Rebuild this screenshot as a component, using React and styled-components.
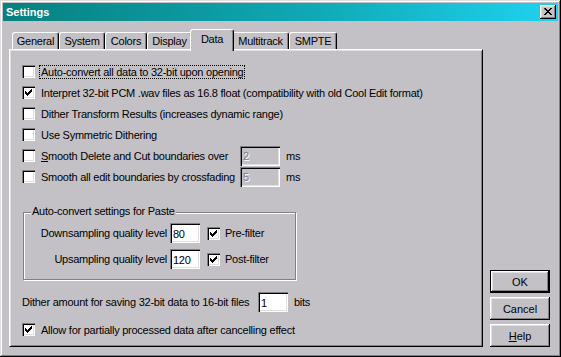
import styled, { createGlobalStyle } from "styled-components";

const face = "#c3c1c6";

const GlobalStyle = createGlobalStyle`
  html, body {
    margin: 0;
    padding: 0;
    background: ${face};
  }
  body {
    font-family: "Liberation Sans", Arial, sans-serif;
    font-size: 11px;
    letter-spacing: -0.25px;
    color: #000;
  }
`;

const raised = `
  box-shadow: inset -1px -1px #000, inset 1px 1px #fff,
    inset -2px -2px #808080, inset 2px 2px #dfdfdf;
`;

const sunken = `
  box-shadow: inset 1px 1px #808080, inset 2px 2px #000,
    inset -1px -1px #fff, inset -2px -2px #dfdfdf;
`;

const Window = styled.div`
  width: 561px;
  height: 357px;
  box-sizing: border-box;
  padding: 3px;
  background: ${face};
  box-shadow: inset -1px -1px #000, inset 1px 1px #dfdfdf,
    inset -2px -2px #808080, inset 2px 2px #fff;
  display: flex;
  flex-direction: column;
`;

const TitleBar = styled.div`
  height: 18px;
  flex: none;
  display: flex;
  align-items: center;
  justify-content: space-between;
  padding: 0 2px 0 3px;
  background: linear-gradient(to right, #07807f, #0fa8b4 55%, #1fd2f0);
  color: #fff;
  font-weight: bold;
  font-size: 11px;
  letter-spacing: 0;
`;

const CloseButton = styled.div`
  width: 16px;
  height: 14px;
  box-sizing: border-box;
  background: ${face};
  ${raised}
  display: flex;
  align-items: center;
  justify-content: center;
  padding-bottom: 1px;
`;

const Body = styled.div`
  flex: 1;
  display: flex;
  gap: 7px;
  padding: 8px 8px 7px 6px;
`;

const Sheet = styled.div`
  width: 474px;
  display: flex;
  flex-direction: column;
`;

const TabStrip = styled.div`
  height: 20px;
  display: flex;
  align-items: flex-end;
  padding-left: 3px;
`;

const Tab = styled.div`
  width: ${(p) => p.$w}px;
  height: ${(p) => (p.$active ? 22 : 17)}px;
  margin: ${(p) => (p.$active ? "0 -2px -2px" : "0")};
  position: relative;
  z-index: ${(p) => (p.$active ? 1 : 0)};
  box-sizing: border-box;
  display: flex;
  align-items: ${(p) => (p.$active ? "flex-start" : "center")};
  padding-top: ${(p) => (p.$active ? 3 : 0)}px;
  justify-content: center;
  background: ${face};
  border: 1px solid;
  border-color: #fff #000 transparent #fff;
  border-bottom: none;
  border-radius: 3px 3px 0 0;
  box-shadow: inset -1px 0 #808080;
`;

const Panel = styled.div`
  flex: 1;
  box-sizing: border-box;
  border: 1px solid;
  border-color: #fff #000 #000 #fff;
  box-shadow: inset 1px 1px #dfdfdf, inset -1px -1px #808080;
  padding: 11px 12px 0 12px;
  display: flex;
  flex-direction: column;
`;

const Row = styled.div`
  height: 21px;
  display: flex;
  align-items: center;
  margin-top: ${(p) => p.$top || 0}px;
`;

const FieldRow = styled.div`
  height: ${(p) => p.$h || 21}px;
  display: grid;
  grid-template-columns: ${(p) => p.$label}px auto auto;
  justify-content: start;
  align-items: center;
  column-gap: 6px;
  white-space: nowrap;
  margin-top: ${(p) => p.$top || 0}px;
`;

const Option = styled.label`
  display: flex;
  align-items: center;
  gap: 5px;
`;

const Box = styled.span`
  width: 13px;
  height: 13px;
  flex: none;
  box-sizing: border-box;
  background: #fff;
  ${sunken}
  display: flex;
  align-items: center;
  justify-content: center;
`;

const Text = styled.span`
  padding: 0 1px;
  line-height: 12px;
  outline: ${(p) => (p.$focus ? "1px dotted #000" : "none")};
  white-space: nowrap;
`;

const TextBox = styled.input`
  width: ${(p) => p.$w}px;
  height: 20px;
  box-sizing: border-box;
  border: none;
  padding: 1px 3px 0;
  margin: 0;
  font: inherit;
  letter-spacing: -0.25px;
  color: ${(p) => (p.disabled ? "#808080" : "#000")};
  text-shadow: ${(p) => (p.disabled ? "1px 1px #fff" : "none")};
  background: ${(p) => (p.disabled ? face : "#fff")};
  ${sunken}
  outline: none;
`;

const Group = styled.div`
  width: 273px;
  height: 68px;
  margin: 25px 0 0 1px;
  box-sizing: border-box;
  border: 1px solid #808080;
  box-shadow: inset 1px 1px #fff, 1px 1px #fff;
  display: flex;
  flex-direction: column;
`;

const Caption = styled.div`
  align-self: flex-start;
  margin: -8px 0 0 7px;
  padding: 0 1px;
  height: 13px;
  line-height: 13px;
  background: ${face};
`;

const GroupGrid = styled.div`
  display: grid;
  grid-template-columns: 143px 30px auto;
  grid-auto-rows: 20px;
  row-gap: 6px;
  column-gap: 3px;
  align-items: center;
  margin-top: 5px;
`;

const RightLabel = styled.span`
  text-align: right;
  white-space: nowrap;
`;

const GroupCheck = styled(Option)`
  margin-left: 4px;
  gap: 4px;
`;

const Buttons = styled.div`
  width: 60px;
  display: flex;
  flex-direction: column;
  justify-content: flex-end;
  gap: 4px;
`;

const Button = styled.button`
  width: 60px;
  height: 23px;
  box-sizing: border-box;
  margin: 0;
  padding: 0;
  font: inherit;
  letter-spacing: 0;
  color: #000;
  background: ${face};
  border: ${(p) => (p.$default ? "1px solid #000" : "none")};
  ${raised}
`;

const Check = () => (
  <svg width="7" height="7" viewBox="0 0 7 7">
    <path d="M0 2h1v1h1v1h1v-1h1v-1h1v-1h1v-1h1v3h-1v1h-1v1h-1v1h-1v1h-1v-1h-1v-1h-1z" fill="#000" />
  </svg>
);

const CheckBox = ({ checked }) => <Box>{checked && <Check />}</Box>;

const tabs = [
  { name: "General", w: 47 },
  { name: "System", w: 46 },
  { name: "Colors", w: 42 },
  { name: "Display", w: 45 },
  { name: "Data", w: 44, active: true },
  { name: "Multitrack", w: 57 },
  { name: "SMPTE", w: 48 },
];

export default function App() {
  return (
    <>
      <GlobalStyle />
      <Window>
        <TitleBar>
          <span>Settings</span>
          <CloseButton>
            <svg width="8" height="7" viewBox="0 0 8 7">
              <path
                d="M0 0h2v1h1v1h2v-1h1v-1h2v1h-1v1h-1v1h-1v1h1v1h1v1h1v1h-2v-1h-1v-1h-2v1h-1v1h-2v-1h1v-1h1v-1h1v-1h-1v-1h-1z"
                fill="#000"
              />
            </svg>
          </CloseButton>
        </TitleBar>
        <Body>
          <Sheet>
            <TabStrip>
              {tabs.map((t) => (
                <Tab key={t.name} $w={t.w} $active={t.active}>
                  {t.name}
                </Tab>
              ))}
            </TabStrip>
            <Panel>
              <Row>
                <Option>
                  <CheckBox />
                  <Text $focus>Auto-convert all data to 32-bit upon opening</Text>
                </Option>
              </Row>
              <Row>
                <Option>
                  <CheckBox checked />
                  <Text>
                    Interpret 32-bit PCM .wav files as 16.8 float (compatibility with old Cool Edit format)
                  </Text>
                </Option>
              </Row>
              <Row>
                <Option>
                  <CheckBox />
                  <Text>Dither Transform Results (increases dynamic range)</Text>
                </Option>
              </Row>
              <Row>
                <Option>
                  <CheckBox />
                  <Text>Use Symmetric Dithering</Text>
                </Option>
              </Row>
              <FieldRow $label={212}>
                <Option>
                  <CheckBox />
                  <Text>
                    <u>S</u>mooth Delete and Cut boundaries over
                  </Text>
                </Option>
                <TextBox $w={40} disabled defaultValue="2" />
                <span>ms</span>
              </FieldRow>
              <FieldRow $label={212}>
                <Option>
                  <CheckBox />
                  <Text>Smooth all edit boundaries by crossfading</Text>
                </Option>
                <TextBox $w={40} disabled defaultValue="5" />
                <span>ms</span>
              </FieldRow>

              <Group>
                <Caption>Auto-convert settings for Paste</Caption>
                <GroupGrid>
                  <RightLabel>Downsampling quality level</RightLabel>
                  <TextBox $w={30} defaultValue="80" />
                  <GroupCheck>
                    <CheckBox checked />
                    <Text>Pre-filter</Text>
                  </GroupCheck>
                  <RightLabel>Upsampling quality level</RightLabel>
                  <TextBox $w={30} defaultValue="120" />
                  <GroupCheck>
                    <CheckBox checked />
                    <Text>Post-filter</Text>
                  </GroupCheck>
                </GroupGrid>
              </Group>

              <FieldRow $label={230} $h={20} $top={12}>
                <span>Dither amount for saving 32-bit data to 16-bit files</span>
                <TextBox $w={30} defaultValue="1" />
                <span>bits</span>
              </FieldRow>
              <Row $top={7}>
                <Option>
                  <CheckBox checked />
                  <Text>Allow for partially processed data after cancelling effect</Text>
                </Option>
              </Row>
            </Panel>
          </Sheet>
          <Buttons>
            <Button $default>OK</Button>
            <Button>Cancel</Button>
            <Button>
              <u>H</u>elp
            </Button>
          </Buttons>
        </Body>
      </Window>
    </>
  );
}
